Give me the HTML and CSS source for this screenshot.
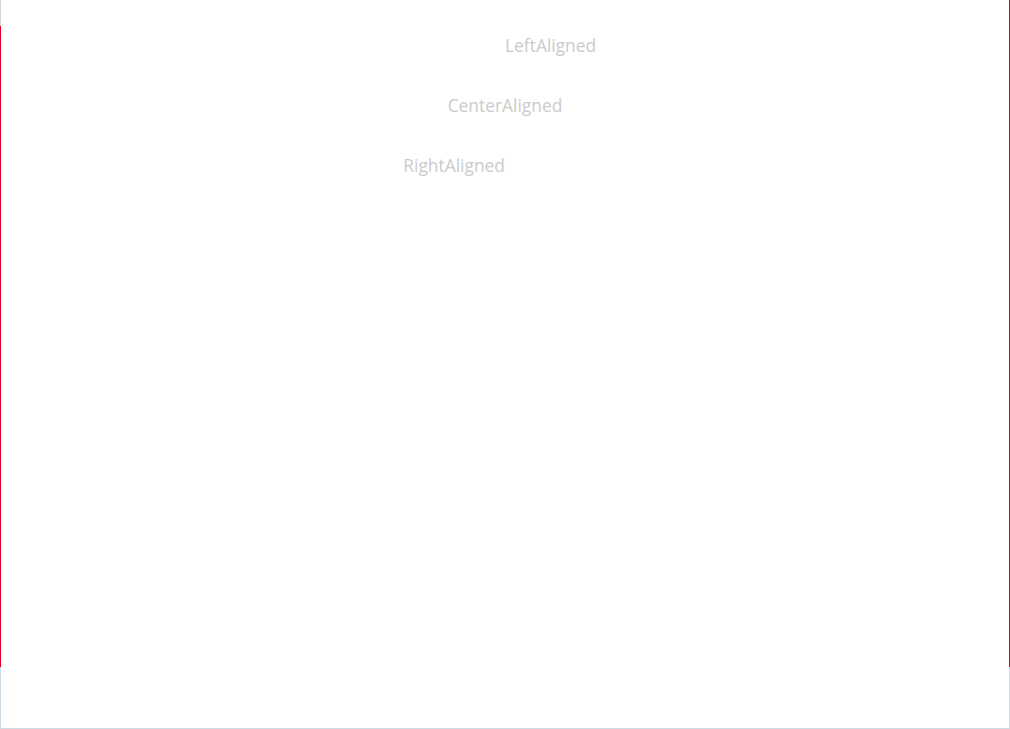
FILE: index.html
```html
<!DOCTYPE html>
<html>
<head>
<meta charset="utf-8">
<link rel="stylesheet" href="styles.css">
</head>
<body>
<div class="frame">
  <div class="main">
    <div class="left-edge">
      <div class="edge-top"></div>
      <div class="edge-red"></div>
    </div>
    <div class="content">
      <div class="row"><span class="left">LeftAligned</span></div>
      <div class="row"><span class="center">CenterAligned</span></div>
      <div class="row"><span class="right">RightAligned</span></div>
    </div>
    <div class="right-edge"></div>
  </div>
  <div class="bottom"></div>
</div>
</body>
</html>
```
FILE: styles.css
```css
html, body {
  margin: 0;
  padding: 0;
  background: #ffffff;
}
.frame {
  width: 1010px;
  height: 729px;
  display: flex;
  flex-direction: column;
}
.main {
  height: 667px;
  display: flex;
}
.left-edge {
  width: 1px;
  display: flex;
  flex-direction: column;
}
.edge-top {
  height: 26px;
  background: #d4d4d4;
}
.edge-red {
  flex: 1;
  background: #e3002b;
}
.right-edge {
  width: 1px;
  background: #b0173a;
}
.content {
  flex: 1;
  padding-top: 15px;
  font-family: "Open Sans", "Noto Sans", sans-serif;
  font-size: 17.4px;
  color: #cbcbcb;
}
.row {
  height: 60px;
  display: grid;
  grid-template-columns: 1fr 1fr;
  align-items: center;
}
.row .left {
  grid-column: 2;
  justify-self: start;
}
.row .center {
  grid-column: 1 / 3;
  justify-self: center;
}
.row .right {
  grid-column: 1;
  justify-self: end;
}
.bottom {
  flex: 1;
  border: 1px solid #cddbe4;
  border-top: none;
}
```
